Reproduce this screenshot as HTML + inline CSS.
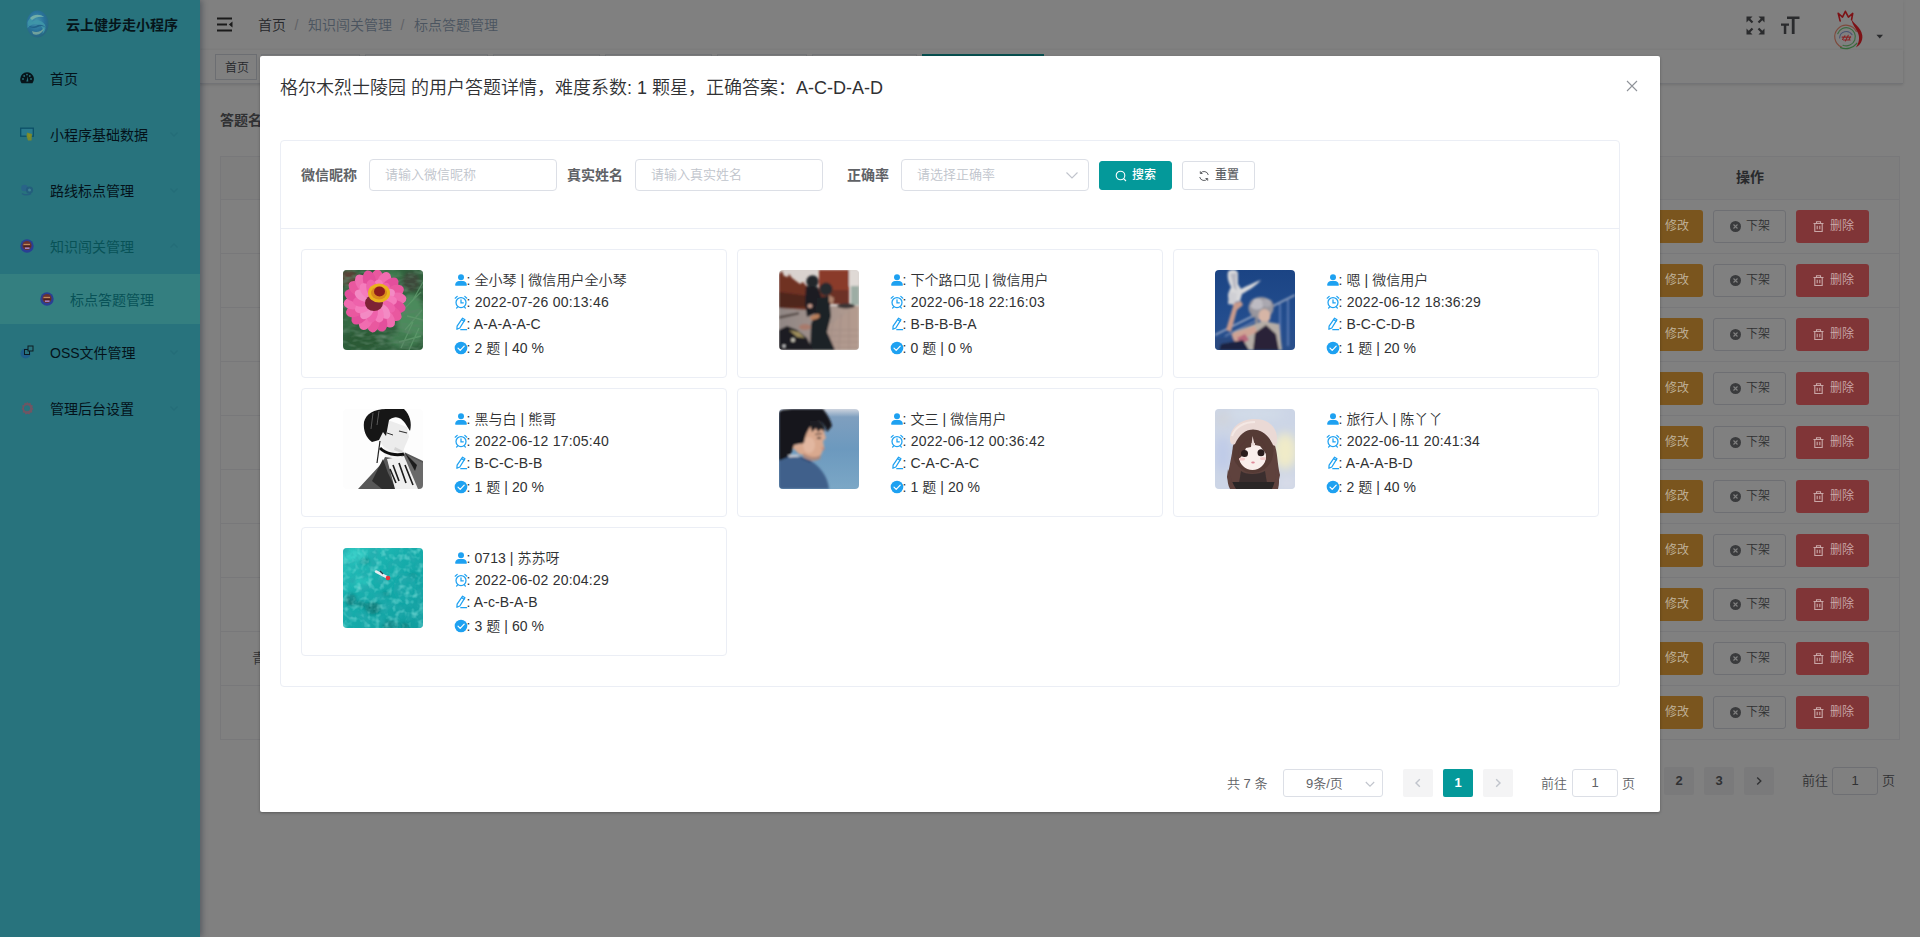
<!DOCTYPE html>
<html lang="zh-CN">
<head>
<meta charset="utf-8">
<title>标点答题管理</title>
<style>
*{box-sizing:border-box;margin:0;padding:0}
html,body{width:1920px;height:937px;overflow:hidden}
body{font-family:"Liberation Sans","Noto Sans CJK SC",sans-serif;font-weight:350;font-size:14px;color:#303133;background:#808080;position:relative}
.abs{position:absolute}
svg{display:block}
/* ---------- sidebar ---------- */
#sidebar{position:absolute;left:0;top:0;width:200px;height:937px;background:#28737d;z-index:5;box-shadow:2px 0 6px rgba(0,21,41,.35)}
#sidebar .logo{position:absolute;left:0;top:0;width:200px;height:50px}
#sidebar .logo .t{position:absolute;left:66px;top:0;line-height:50px;font-size:14px;font-weight:700;color:#06151a;white-space:nowrap}
.mi{position:absolute;left:0;width:200px;height:56px;line-height:56px;font-size:14px;color:#04121a;white-space:nowrap}
.mi .tx{position:absolute;left:50px;top:1px;font-weight:400}
.mi .ic{position:absolute;left:20px;top:21px;width:14px;height:14px}
.mi .ar{position:absolute;left:168px;top:22px;width:12px;height:12px}
.mi.act{color:#085257}
.sub{position:absolute;left:0;top:274px;width:200px;height:50px;background:#347f80;line-height:50px;color:#085257;font-size:14px}
.sub .tx{position:absolute;left:70px;top:1px;font-weight:400}
.sub .ic{position:absolute;left:40px;top:18px;width:14px;height:14px}
/* ---------- dimmed main ---------- */
#main{position:absolute;left:200px;top:0;width:1720px;height:937px;background:#808080;overflow:hidden}
#navbar{position:absolute;left:0;top:0;width:1703px;height:50px;background:#808080;box-shadow:0 1px 4px rgba(0,10,20,.08)}
#tags{position:absolute;left:0;top:50px;width:1703px;height:34px;background:#808080;border-bottom:1px solid #727376;box-shadow:0 1px 3px 0 rgba(0,0,0,.10),0 0 3px 0 rgba(0,0,0,.04)}
.bc{position:absolute;top:0;line-height:50px;font-size:14px;white-space:nowrap}

/* ---------- table behind ---------- */
#tbl{position:absolute;left:20px;top:156px;width:1680px;height:584px;border:1px solid #78787a;border-bottom:0;background:#808080}
#tbl .th{position:absolute;left:0;top:0;width:1678px;height:43px;background:#7e7e7e;border-bottom:1px solid #78787a}
#tbl .th b{position:absolute;left:1515px;top:-1px;line-height:42px;font-size:14px;color:#28292b;font-weight:700}
.tr{position:absolute;left:0;width:1678px;height:54px;border-bottom:1px solid #78787a}
.tb{position:absolute;top:10px;height:33px;width:73px;border-radius:3px;font-size:12px;line-height:33px;white-space:nowrap}
.tb svg{position:absolute;top:10px;width:13px;height:13px}
.tb span{position:absolute;top:0}
.b1{left:1409px;background:#7a551e;color:#c2b69e}
.b2{left:1492px;border:1px solid #6e6f73;color:#303133;line-height:31px}
.b2 svg{top:9px}
.b3{left:1575px;background:#803537;color:#cdabab}
.pg{position:absolute;top:767px;height:28px;width:30px;border-radius:2px;background:#7a7a7b;color:#303133;font-size:13px;line-height:28px;text-align:center;font-weight:700}
.tag{position:absolute;top:4px;height:26px;border:1px solid #6c6e72;font-size:12px;line-height:24px;color:#24272b;white-space:nowrap;background:#808080}
/* ---------- modal ---------- */
#dlg{position:absolute;left:260px;top:56px;width:1400px;height:756px;background:#fff;border-radius:2px;box-shadow:0 1px 3px rgba(0,0,0,.3);z-index:10}
#dlg .title{position:absolute;left:20px;top:20px;line-height:24px;font-size:18px;color:#303133;white-space:nowrap}
#card{position:absolute;left:20px;top:84px;width:1340px;height:547px;border:1px solid #ebeef5;border-radius:4px;background:#fff}
#card .hd{position:absolute;left:0;top:0;width:1338px;height:88px;border-bottom:1px solid #ebeef5}
.lbl{position:absolute;top:18px;line-height:32px;font-size:14px;font-weight:700;color:#606266;white-space:nowrap}
.inp{position:absolute;top:18px;width:188px;height:32px;border:1px solid #dcdfe6;border-radius:4px;background:#fff;line-height:30px;padding-left:15px;font-size:13px;color:#c0c4cc;white-space:nowrap}
.btn{position:absolute;top:20px;height:29px;border-radius:3px;font-size:12px;font-weight:500;line-height:27px;white-space:nowrap;border:1px solid #dcdfe6;color:#606266;background:#fff}
.uc{position:absolute;width:426px;height:129px;border:1px solid #ebeef5;border-radius:4px;background:#fff}
.uc .av{position:absolute;left:41px;top:20px;width:80px;height:80px;border-radius:4px;overflow:hidden}
.uc .ln{position:absolute;left:152px;height:22px;line-height:22px;font-size:14px;color:#303133;white-space:nowrap}
.uc .ln svg{position:absolute;left:0;top:4px;width:14px;height:14px}
.uc .ln span{position:absolute;left:12.600px;top:0}

.pgn{position:absolute;left:0;top:713px;width:1400px;height:28px}
.pb{position:absolute;top:0;width:30px;height:28px;border-radius:2px;background:#f4f4f5;color:#606266;font-size:13px;font-weight:700;line-height:28px;text-align:center}
.pb svg{margin:8px 0 0 9px}
.uc .ln span{letter-spacing:.06px}
.uc .l2 span{letter-spacing:.22px}
.uc .l3 span{letter-spacing:.1px}
</style>
</head>
<body>
<div id="main">
  <div class="abs" style="left:20px;top:100px;line-height:40px;font-size:14px;font-weight:700;color:#303133;white-space:nowrap">答题名称</div>
  <div id="tbl"><div class="th"><b>操作</b></div>
<div class="tr" style="top:43px"><div class="tb b1"><span style="left:35px">修改</span></div><div class="tb b2"><svg style="left:15px" viewBox="0 0 13 13"><circle cx="6.500" cy="6.500" r="5.500" fill="#3a3b3d"/><path d="M4.500 4.500l4 4M8.500 4.500l-4 4" stroke="#808080" stroke-width="1.100"/></svg><span style="left:32px">下架</span></div><div class="tb b3"><svg style="left:16px" viewBox="0 0 13 13"><path d="M1.500 3.500h10M4.500 3.500V1.800h4v1.700M2.800 3.500v8h7.400v-8M5.200 5.800v3.500M7.800 5.800v3.500" fill="none" stroke="#c9a7a7" stroke-width="1.100"/></svg><span style="left:34px">删除</span></div></div>
<div class="tr" style="top:97px"><div class="tb b1"><span style="left:35px">修改</span></div><div class="tb b2"><svg style="left:15px" viewBox="0 0 13 13"><circle cx="6.500" cy="6.500" r="5.500" fill="#3a3b3d"/><path d="M4.500 4.500l4 4M8.500 4.500l-4 4" stroke="#808080" stroke-width="1.100"/></svg><span style="left:32px">下架</span></div><div class="tb b3"><svg style="left:16px" viewBox="0 0 13 13"><path d="M1.500 3.500h10M4.500 3.500V1.800h4v1.700M2.800 3.500v8h7.400v-8M5.200 5.800v3.500M7.800 5.800v3.500" fill="none" stroke="#c9a7a7" stroke-width="1.100"/></svg><span style="left:34px">删除</span></div></div>
<div class="tr" style="top:151px"><div class="tb b1"><span style="left:35px">修改</span></div><div class="tb b2"><svg style="left:15px" viewBox="0 0 13 13"><circle cx="6.500" cy="6.500" r="5.500" fill="#3a3b3d"/><path d="M4.500 4.500l4 4M8.500 4.500l-4 4" stroke="#808080" stroke-width="1.100"/></svg><span style="left:32px">下架</span></div><div class="tb b3"><svg style="left:16px" viewBox="0 0 13 13"><path d="M1.500 3.500h10M4.500 3.500V1.800h4v1.700M2.800 3.500v8h7.400v-8M5.200 5.800v3.500M7.800 5.800v3.500" fill="none" stroke="#c9a7a7" stroke-width="1.100"/></svg><span style="left:34px">删除</span></div></div>
<div class="tr" style="top:205px"><div class="tb b1"><span style="left:35px">修改</span></div><div class="tb b2"><svg style="left:15px" viewBox="0 0 13 13"><circle cx="6.500" cy="6.500" r="5.500" fill="#3a3b3d"/><path d="M4.500 4.500l4 4M8.500 4.500l-4 4" stroke="#808080" stroke-width="1.100"/></svg><span style="left:32px">下架</span></div><div class="tb b3"><svg style="left:16px" viewBox="0 0 13 13"><path d="M1.500 3.500h10M4.500 3.500V1.800h4v1.700M2.800 3.500v8h7.400v-8M5.200 5.800v3.500M7.800 5.800v3.500" fill="none" stroke="#c9a7a7" stroke-width="1.100"/></svg><span style="left:34px">删除</span></div></div>
<div class="tr" style="top:259px"><div class="tb b1"><span style="left:35px">修改</span></div><div class="tb b2"><svg style="left:15px" viewBox="0 0 13 13"><circle cx="6.500" cy="6.500" r="5.500" fill="#3a3b3d"/><path d="M4.500 4.500l4 4M8.500 4.500l-4 4" stroke="#808080" stroke-width="1.100"/></svg><span style="left:32px">下架</span></div><div class="tb b3"><svg style="left:16px" viewBox="0 0 13 13"><path d="M1.500 3.500h10M4.500 3.500V1.800h4v1.700M2.800 3.500v8h7.400v-8M5.200 5.800v3.500M7.800 5.800v3.500" fill="none" stroke="#c9a7a7" stroke-width="1.100"/></svg><span style="left:34px">删除</span></div></div>
<div class="tr" style="top:313px"><div class="tb b1"><span style="left:35px">修改</span></div><div class="tb b2"><svg style="left:15px" viewBox="0 0 13 13"><circle cx="6.500" cy="6.500" r="5.500" fill="#3a3b3d"/><path d="M4.500 4.500l4 4M8.500 4.500l-4 4" stroke="#808080" stroke-width="1.100"/></svg><span style="left:32px">下架</span></div><div class="tb b3"><svg style="left:16px" viewBox="0 0 13 13"><path d="M1.500 3.500h10M4.500 3.500V1.800h4v1.700M2.800 3.500v8h7.400v-8M5.200 5.800v3.500M7.800 5.800v3.500" fill="none" stroke="#c9a7a7" stroke-width="1.100"/></svg><span style="left:34px">删除</span></div></div>
<div class="tr" style="top:367px"><div class="tb b1"><span style="left:35px">修改</span></div><div class="tb b2"><svg style="left:15px" viewBox="0 0 13 13"><circle cx="6.500" cy="6.500" r="5.500" fill="#3a3b3d"/><path d="M4.500 4.500l4 4M8.500 4.500l-4 4" stroke="#808080" stroke-width="1.100"/></svg><span style="left:32px">下架</span></div><div class="tb b3"><svg style="left:16px" viewBox="0 0 13 13"><path d="M1.500 3.500h10M4.500 3.500V1.800h4v1.700M2.800 3.500v8h7.400v-8M5.200 5.800v3.500M7.800 5.800v3.500" fill="none" stroke="#c9a7a7" stroke-width="1.100"/></svg><span style="left:34px">删除</span></div></div>
<div class="tr" style="top:421px"><div class="tb b1"><span style="left:35px">修改</span></div><div class="tb b2"><svg style="left:15px" viewBox="0 0 13 13"><circle cx="6.500" cy="6.500" r="5.500" fill="#3a3b3d"/><path d="M4.500 4.500l4 4M8.500 4.500l-4 4" stroke="#808080" stroke-width="1.100"/></svg><span style="left:32px">下架</span></div><div class="tb b3"><svg style="left:16px" viewBox="0 0 13 13"><path d="M1.500 3.500h10M4.500 3.500V1.800h4v1.700M2.800 3.500v8h7.400v-8M5.200 5.800v3.500M7.800 5.800v3.500" fill="none" stroke="#c9a7a7" stroke-width="1.100"/></svg><span style="left:34px">删除</span></div></div>
<div class="tr" style="top:475px"><span class="abs" style="left:31px;top:0;line-height:53px;font-size:14px;color:#303133">青海省格尔木市</span><div class="tb b1"><span style="left:35px">修改</span></div><div class="tb b2"><svg style="left:15px" viewBox="0 0 13 13"><circle cx="6.500" cy="6.500" r="5.500" fill="#3a3b3d"/><path d="M4.500 4.500l4 4M8.500 4.500l-4 4" stroke="#808080" stroke-width="1.100"/></svg><span style="left:32px">下架</span></div><div class="tb b3"><svg style="left:16px" viewBox="0 0 13 13"><path d="M1.500 3.500h10M4.500 3.500V1.800h4v1.700M2.800 3.500v8h7.400v-8M5.200 5.800v3.500M7.800 5.800v3.500" fill="none" stroke="#c9a7a7" stroke-width="1.100"/></svg><span style="left:34px">删除</span></div></div>
<div class="tr" style="top:529px"><div class="tb b1"><span style="left:35px">修改</span></div><div class="tb b2"><svg style="left:15px" viewBox="0 0 13 13"><circle cx="6.500" cy="6.500" r="5.500" fill="#3a3b3d"/><path d="M4.500 4.500l4 4M8.500 4.500l-4 4" stroke="#808080" stroke-width="1.100"/></svg><span style="left:32px">下架</span></div><div class="tb b3"><svg style="left:16px" viewBox="0 0 13 13"><path d="M1.500 3.500h10M4.500 3.500V1.800h4v1.700M2.800 3.500v8h7.400v-8M5.200 5.800v3.500M7.800 5.800v3.500" fill="none" stroke="#c9a7a7" stroke-width="1.100"/></svg><span style="left:34px">删除</span></div></div>
  </div>
  <div class="pg" style="left:1464px">2</div><div class="pg" style="left:1504px">3</div>
  <div class="pg" style="left:1544px"><svg style="margin:8px 0 0 9px" width="12" height="12" viewBox="0 0 12 12"><path d="M4.200 2.500L7.800 6l-3.600 3.500" fill="none" stroke="#303133" stroke-width="1.400"/></svg></div>
  <div class="abs" style="left:1602px;top:767px;line-height:28px;font-size:13px;color:#303133;white-space:nowrap">前往</div>
  <div class="abs" style="left:1632px;top:767px;width:46px;height:28px;border:1px solid #6e6f73;border-radius:3px;text-align:center;line-height:26px;font-size:13px;color:#303133">1</div>
  <div class="abs" style="left:1682px;top:767px;line-height:28px;font-size:13px;color:#303133">页</div>
  <div id="navbar">
    <svg class="abs" style="left:16px;top:15px" width="20" height="20" viewBox="0 0 20 20"><path d="M1 3.500h15M1 9.500h10M1 15.500h15" stroke="#1a1a1a" stroke-width="1.800"/><path d="M16.500 6.500v6L12.800 9.500z" fill="#1a1a1a"/></svg>
    <span class="bc" style="left:58px;color:#26272a">首页</span>
    <span class="bc" style="left:94.500px;color:#606266">/</span>
    <span class="bc" style="left:108px;color:#4b545f">知识闯关管理</span>
    <span class="bc" style="left:200.500px;color:#606266">/</span>
    <span class="bc" style="left:214px;color:#4b545f">标点答题管理</span>
    <svg class="abs" style="left:1546px;top:16px" width="19" height="19" viewBox="0 0 19 19"><g fill="#2a2b2d"><path d="M.5.500h6L4.300 2.700l3 3-1.600 1.600-3-3L.5 6.500z"/><path d="M18.500.500v6l-2.200-2.200-3 3-1.600-1.600 3-3L12.500.500z"/><path d="M.5 18.500v-6l2.200 2.200 3-3 1.600 1.600-3 3 2.200 2.200z"/><path d="M18.500 18.500h-6l2.200-2.200-3-3 1.600-1.600 3 3 2.200-2.200z"/></g></svg>
    <svg class="abs" style="left:1580px;top:15px" width="20" height="20" viewBox="0 0 20 20"><g fill="#2a2b2d"><path d="M7 1.500h12.500v2.600h-4.900V19h-2.800V4.100H7z"/><path d="M1 8.500h8v2.300H6.300V19H3.800v-8.200H1z"/></g></svg>
    <svg class="abs" style="left:1632px;top:7.500px" width="34.400" height="42" viewBox="0 0 36 44"><g fill="none" stroke-linecap="round" stroke-linejoin="round"><path d="M8.500 13.500L6.500 5.500l4.500 4L14 3.500l3.200 6 4.500-3.800-1.200 6.500" stroke="#7d1216" stroke-width="1.700"/><path d="M25.500 24.500A12 12 0 1 0 10 41" stroke="#7d4a3c" stroke-width="1.200"/><path d="M6 27A9.500 9.500 0 1 1 11.500 39" stroke="#3d6a40" stroke-width="1.200"/><path d="M8 31.500a7 7 0 0 1 13-3.500" stroke="#4a5270" stroke-width="1.100"/><path d="M9 41.500c6 2.500 13 .5 17-4.500" stroke="#376a3a" stroke-width="1.400"/></g><path d="M20.300 11c1.200 5 10.200 9 11.400 17.500.8 6-2.500 10.500-6.700 12.800 3.200-4.600 4.300-9.800 2.300-14.800-2-5.400-6.300-8.500-7-15.500z" fill="#7d1216"/><g stroke="#8a2426" stroke-width="1.100" fill="none" stroke-linecap="round"><path d="M11 33l2.500-4M14 34.500l3-6M17.500 33.500l2-3.500M10.500 30.500h9M12 33.500h7"/></g></svg>
    <svg class="abs" style="left:1675.500px;top:33.500px" width="7.500" height="5" viewBox="0 0 9 6"><path d="M.5.800h8L4.500 5.500z" fill="#2a2b2d"/></svg>
  </div>
  <div id="tags">
    <div class="tag" style="left:15px;width:42px;padding-left:9px;line-height:26px">首页</div>
    <div class="tag" style="left:61px;width:99px;border-color:#737578"></div>
    <div class="tag" style="left:165px;width:123px;border-color:#737578"></div>
    <div class="tag" style="left:293px;width:107px;border-color:#737578"></div>
    <div class="tag" style="left:405px;width:107px;border-color:#737578"></div>
    <div class="tag" style="left:517px;width:90px;border-color:#737578"></div>
    <div class="tag" style="left:612px;width:105px;border-color:#737578"></div>
    <div class="tag" style="left:722px;width:122px;background:#085050;border-color:#085050"></div>
  </div>
</div>
<div id="sidebar">
  <div class="logo">
    <svg class="abs" style="left:25px;top:9px" width="25" height="30" viewBox="0 0 25 30">
      <defs><radialGradient id="lg1" cx="45%" cy="40%" r="60%"><stop offset="0" stop-color="#4595ad"/><stop offset=".6" stop-color="#29729a"/><stop offset="1" stop-color="#276680"/></radialGradient></defs>
      <ellipse cx="12.5" cy="15" rx="11" ry="13.5" fill="url(#lg1)"/>
      <path d="M2.5 13c3-7 11-9 17-5-5-1-10 0-13 5 4-3 10-2 13 2 2 3 1 7-2 10 1-4 0-7-3-9-4-2-8-1-12 3z" fill="#3f97a8" opacity=".9"/>
      <path d="M5 9c4-4 10-4 14-1-4-1-9 0-12 3z" fill="#7fb4a8" opacity=".8"/>
      <path d="M7 22c4 2 9 1 12-3-1 5-6 8-11 6z" fill="#8fb7a0" opacity=".7"/>
      <path d="M3 16c2 3 6 4 10 2 3-2 6-1 8 1-3-4-7-4-10-2-3 1-6 1-8-1z" fill="#1f5f86" opacity=".9"/>
    </svg>
    <div class="t">云上健步走小程序</div>
  </div>
  <div class="mi" style="top:50px">
    <svg class="ic" viewBox="0 0 14 14"><path d="M7 1.2A6.8 6.8 0 0 0 .2 8c0 1.6.5 3 1.400 4.200h10.800A6.800 6.800 0 0 0 7 1.200z" fill="#07141a"/><circle cx="3" cy="8" r=".9" fill="#28737d"/><circle cx="4.200" cy="5" r=".9" fill="#28737d"/><circle cx="7" cy="3.600" r=".9" fill="#28737d"/><circle cx="9.800" cy="5" r=".9" fill="#28737d"/><circle cx="11" cy="8" r=".9" fill="#28737d"/><path d="M6.300 10.500l1.500-5 .5 5z" fill="#28737d"/></svg>
    <span class="tx">首页</span>
  </div>
  <div class="mi" style="top:106px">
    <svg class="ic" viewBox="0 0 14 14"><rect x=".7" y="1.200" width="12.600" height="8" fill="#2a7a8c" stroke="#0c5068" stroke-width="1.300"/><path d="M7 5.500l5 1.500-.5 6.500H8L6.500 9z" fill="#76892f"/><path d="M8 6.500l2.500.8-.3 3H8.500z" fill="#8a8f25"/></svg>
    <span class="tx">小程序基础数据</span>
    <svg class="ar" viewBox="0 0 12 12"><path d="M2.500 4.500L6 8l3.500-3.500" fill="none" stroke="#246d78" stroke-width="1.300"/></svg>
  </div>
  <div class="mi" style="top:162px">
    <svg class="ic" viewBox="0 0 14 14"><circle cx="4.500" cy="5" r="3.300" fill="#2a5f8c" opacity=".75"/><circle cx="9.500" cy="7" r="3.600" fill="#22587c" opacity=".75"/><circle cx="9.500" cy="7" r="1.500" fill="#3f7f94"/><path d="M2 10.500c2 1.500 6 1.500 9 0" stroke="#245a80" stroke-width="1.500" fill="none" opacity=".8"/></svg>
    <span class="tx">路线标点管理</span>
    <svg class="ar" viewBox="0 0 12 12"><path d="M2.500 4.500L6 8l3.500-3.500" fill="none" stroke="#246d78" stroke-width="1.300"/></svg>
  </div>
  <div class="mi act" style="top:218px">
    <svg class="ic" viewBox="0 0 14 14"><circle cx="7" cy="7" r="6.700" fill="#2a3f94"/><circle cx="7" cy="6.500" r="4.600" fill="#6a3230"/><path d="M3.500 5.500h6.500" stroke="#c08a5a" stroke-width="1.300"/><path d="M5 9.200h4.500" stroke="#a884c8" stroke-width="1.500"/><path d="M3.500 7.200h7" stroke="#3a1a1a" stroke-width="1"/></svg>
    <span class="tx">知识闯关管理</span>
    <svg class="ar" viewBox="0 0 12 12"><path d="M2.500 7.500L6 4l3.500 3.500" fill="none" stroke="#246d78" stroke-width="1.300"/></svg>
  </div>
  <div class="sub">
    <svg class="ic" viewBox="0 0 14 14"><circle cx="7" cy="7" r="6.700" fill="#2a3f94"/><circle cx="7" cy="6.500" r="4.600" fill="#6a3230"/><path d="M3.500 5.500h6.500" stroke="#c08a5a" stroke-width="1.300"/><path d="M5 9.200h4.500" stroke="#a884c8" stroke-width="1.500"/><path d="M3.500 7.200h7" stroke="#3a1a1a" stroke-width="1"/></svg>
    <span class="tx">标点答题管理</span>
  </div>
  <div class="mi" style="top:324px">
    <svg class="ic" viewBox="0 0 14 14"><circle cx="5.500" cy="8.500" r="5" fill="#1f5f8a"/><rect x="4.500" y="4.500" width="5" height="5" fill="#28737d" stroke="#0c1c22" stroke-width="1"/><rect x="8" y="1" width="5" height="5" fill="#28737d" stroke="#0c1c22" stroke-width="1"/></svg>
    <span class="tx">OSS文件管理</span>
    <svg class="ar" viewBox="0 0 12 12"><path d="M2.500 4.500L6 8l3.500-3.500" fill="none" stroke="#246d78" stroke-width="1.300"/></svg>
  </div>
  <div class="mi" style="top:380px">
    <svg class="ic" viewBox="0 0 14 14"><path d="M7 .8l1.400 1.500 2-.5.500 2 2 .6-.6 2 1.300 1.600-1.500 1.300.2 2.100-2 .3-.9 1.900L7.500 12.800 5.600 13.600l-.9-1.900-2-.3.200-2.100L1.400 8l1.300-1.600-.6-2 2-.6.500-2 2 .5z" fill="#6f5664"/><circle cx="7" cy="7.200" r="3" fill="#28737d"/></svg>
    <span class="tx">管理后台设置</span>
    <svg class="ar" viewBox="0 0 12 12"><path d="M2.500 4.500L6 8l3.500-3.500" fill="none" stroke="#246d78" stroke-width="1.300"/></svg>
  </div>
</div>
<div id="dlg">
  <div class="title">格尔木烈士陵园 的用户答题详情，难度系数: 1 颗星，正确答案：A-C-D-A-D</div>
  <svg class="abs" style="left:1365px;top:23px" width="14" height="14" viewBox="0 0 14 14"><path d="M2 2l10 10M12 2L2 12" stroke="#8f9399" stroke-width="1.100"/></svg>
  <div id="card">
    <div class="hd">
      <div class="lbl" style="left:20px">微信昵称</div>
      <div class="inp" style="left:88px">请输入微信昵称</div>
      <div class="lbl" style="left:286px">真实姓名</div>
      <div class="inp" style="left:354px">请输入真实姓名</div>
      <div class="lbl" style="left:566px">正确率</div>
      <div class="inp" style="left:620px">请选择正确率<svg class="abs" style="left:162.500px;top:7.500px" width="14" height="14" viewBox="0 0 14 14"><path d="M1.500 4.500L7 10l5.500-5.500" fill="none" stroke="#c0c4cc" stroke-width="1.100"/></svg></div>
      <div class="btn" style="left:818px;width:73px;background:#04999a;border-color:#04999a;color:#fff"><svg class="abs" style="left:15px;top:8px" width="12" height="12" viewBox="0 0 12 12"><circle cx="5.500" cy="5.500" r="4.300" fill="none" stroke="#fff" stroke-width="1.100"/><path d="M8.600 8.600l2.400 2.400" stroke="#fff" stroke-width="1.100"/></svg><span class="abs" style="left:32px;top:0">搜索</span></div>
      <div class="btn" style="left:901px;width:73px"><svg class="abs" style="left:15px;top:8px" width="12" height="12" viewBox="0 0 12 12"><g fill="none" stroke="#606266" stroke-width="1"><path d="M10.300 5A4.400 4.400 0 0 0 2.500 3.200"/><path d="M1.700 7A4.400 4.400 0 0 0 9.500 8.800"/><path d="M2.300 1.300v2.200h2.200M9.700 10.700V8.500H7.500"/></g></svg><span class="abs" style="left:32px;top:0">重置</span></div>
    </div>
    <!--CARDS-->
    <div class="uc" style="left:20px;top:108px">
      <div class="av"><svg width="80" height="80" viewBox="0 0 80 80"><defs><filter id="b1" x="-10%" y="-10%" width="120%" height="120%"><feGaussianBlur stdDeviation=".7"/></filter><filter id="n1" x="0" y="0" width="100%" height="100%"><feTurbulence type="fractalNoise" baseFrequency=".09 .2" numOctaves="2" seed="7"/><feColorMatrix values="0 0 0 0 .10  0 0 0 0 .22  0 0 0 0 .13  2.200 0 0 0 -.950"/></filter><filter id="b1b" x="-20%" y="-20%" width="140%" height="140%"><feGaussianBlur stdDeviation="2"/></filter></defs><rect width="80" height="80" fill="#2f5f3c"/><g filter="url(#b1b)"><ellipse cx="6" cy="8" rx="9" ry="8" fill="#5a4034"/><ellipse cx="68" cy="12" rx="9" ry="10" fill="#3c4a3a"/><ellipse cx="68" cy="50" rx="14" ry="26" fill="#4c8a5c"/><ellipse cx="60" cy="70" rx="14" ry="8" fill="#3f7a50"/><ellipse cx="20" cy="70" rx="18" ry="9" fill="#2a5a36"/><ellipse cx="48" cy="5" rx="12" ry="5" fill="#3f7a4e"/><ellipse cx="6" cy="50" rx="6" ry="12" fill="#356b42"/></g><g filter="url(#b1)" stroke="#5f9a6c" stroke-width="1.300" fill="none" opacity=".8"><path d="M58 78L70 52M62 60L79 40M66 80L76 58M60 40L78 22M70 30L80 12M56 72L78 66M64 46L80 50"/></g><rect width="80" height="80" filter="url(#n1)"/><g filter="url(#b1)"><ellipse cx="32" cy="10" rx="6.500" ry="10.500" fill="#e9599f" transform="rotate(5 32 31)"/><ellipse cx="32" cy="10" rx="6.500" ry="10.500" fill="#f06cb0" transform="rotate(25 32 31)"/><ellipse cx="32" cy="10" rx="6.500" ry="10.500" fill="#e34f9c" transform="rotate(45 32 31)"/><ellipse cx="32" cy="10" rx="6.500" ry="10.500" fill="#e9599f" transform="rotate(65 32 31)"/><ellipse cx="32" cy="10" rx="6.500" ry="10.500" fill="#f06cb0" transform="rotate(85 32 31)"/><ellipse cx="32" cy="10" rx="6.500" ry="10.500" fill="#e34f9c" transform="rotate(105 32 31)"/><ellipse cx="32" cy="10" rx="6.500" ry="10.500" fill="#e9599f" transform="rotate(125 32 31)"/><ellipse cx="32" cy="10" rx="6.500" ry="10.500" fill="#f06cb0" transform="rotate(145 32 31)"/><ellipse cx="32" cy="10" rx="6.500" ry="10.500" fill="#e34f9c" transform="rotate(165 32 31)"/><ellipse cx="32" cy="10" rx="6.500" ry="10.500" fill="#e9599f" transform="rotate(185 32 31)"/><ellipse cx="32" cy="10" rx="6.500" ry="10.500" fill="#f06cb0" transform="rotate(205 32 31)"/><ellipse cx="32" cy="10" rx="6.500" ry="10.500" fill="#e34f9c" transform="rotate(225 32 31)"/><ellipse cx="32" cy="10" rx="6.500" ry="10.500" fill="#e9599f" transform="rotate(245 32 31)"/><ellipse cx="32" cy="10" rx="6.500" ry="10.500" fill="#f06cb0" transform="rotate(265 32 31)"/><ellipse cx="32" cy="10" rx="6.500" ry="10.500" fill="#e34f9c" transform="rotate(285 32 31)"/><ellipse cx="32" cy="10" rx="6.500" ry="10.500" fill="#e9599f" transform="rotate(305 32 31)"/><ellipse cx="32" cy="10" rx="6.500" ry="10.500" fill="#f06cb0" transform="rotate(325 32 31)"/><ellipse cx="32" cy="10" rx="6.500" ry="10.500" fill="#e34f9c" transform="rotate(345 32 31)"/><ellipse cx="32" cy="18" rx="5.500" ry="9" fill="#f57cbc" transform="rotate(12.0 32 31)"/><ellipse cx="32" cy="18" rx="5.500" ry="9" fill="#ee62ab" transform="rotate(37.7 32 31)"/><ellipse cx="32" cy="18" rx="5.500" ry="9" fill="#f38ac4" transform="rotate(63.4 32 31)"/><ellipse cx="32" cy="18" rx="5.500" ry="9" fill="#f57cbc" transform="rotate(89.1 32 31)"/><ellipse cx="32" cy="18" rx="5.500" ry="9" fill="#ee62ab" transform="rotate(114.8 32 31)"/><ellipse cx="32" cy="18" rx="5.500" ry="9" fill="#f38ac4" transform="rotate(140.5 32 31)"/><ellipse cx="32" cy="18" rx="5.500" ry="9" fill="#f57cbc" transform="rotate(166.2 32 31)"/><ellipse cx="32" cy="18" rx="5.500" ry="9" fill="#ee62ab" transform="rotate(191.9 32 31)"/><ellipse cx="32" cy="18" rx="5.500" ry="9" fill="#f38ac4" transform="rotate(217.6 32 31)"/><ellipse cx="32" cy="18" rx="5.500" ry="9" fill="#f57cbc" transform="rotate(243.29999999999998 32 31)"/><ellipse cx="32" cy="18" rx="5.500" ry="9" fill="#ee62ab" transform="rotate(269.0 32 31)"/><ellipse cx="32" cy="18" rx="5.500" ry="9" fill="#f38ac4" transform="rotate(294.7 32 31)"/><ellipse cx="32" cy="18" rx="5.500" ry="9" fill="#f57cbc" transform="rotate(320.4 32 31)"/><ellipse cx="32" cy="18" rx="5.500" ry="9" fill="#ee62ab" transform="rotate(346.09999999999997 32 31)"/><ellipse cx="31" cy="33" rx="9" ry="8" fill="#7e2236"/><ellipse cx="36" cy="23" rx="11" ry="9.500" fill="#e9b21e"/><ellipse cx="36" cy="23" rx="8" ry="6.500" fill="#d98a1c"/><ellipse cx="36.500" cy="21.500" rx="5.500" ry="5" fill="#8c1c1c"/></g></svg></div>
      <div class="ln" style="top:19px"><svg viewBox="0 0 14 14"><circle cx="7" cy="4.300" r="3" fill="#1ea1f1"/><path d="M1.300 12.800v-1.500c0-2 2-3.300 3.600-3.300h4.200c1.600 0 3.600 1.300 3.600 3.300v1.500z" fill="#1ea1f1"/></svg><span>: 全小琴 | 微信用户全小琴</span></div>
      <div class="ln l2" style="top:41px"><svg viewBox="0 0 14 14"><g fill="none" stroke="#1ea1f1" stroke-width="1.250" stroke-linecap="round"><circle cx="7" cy="7.600" r="5"/><path d="M7 4.800v3h2.300"/><path d="M1.200 3.200L3.200 1.400M12.800 3.200l-2-1.800M3.600 11.800l-1 1.300M10.400 11.800l1 1.300"/></g></svg><span>: 2022-07-26 00:13:46</span></div>
      <div class="ln l3" style="top:63px"><svg viewBox="0 0 14 14"><g fill="none" stroke="#1ea1f1" stroke-width="1.250" stroke-linecap="round" stroke-linejoin="round"><path d="M8.600 1.200l2.400 1.500-5.200 8.300-2.900 1.300.2-3.100z"/><path d="M7.700 2.700l2.400 1.500"/><path d="M6.800 12.700h5.800"/></g></svg><span>: A-A-A-A-C</span></div>
      <div class="ln" style="top:87px"><svg viewBox="0 0 14 14"><circle cx="7" cy="7" r="6.300" fill="#1ea1f1"/><path d="M4 7.200l2.200 2.200L10.200 5.200" fill="none" stroke="#fff" stroke-width="1.200" stroke-linecap="round" stroke-linejoin="round"/></svg><span>: 2 题 | 40 %</span></div>
    </div>
    <div class="uc" style="left:456px;top:108px">
      <div class="av"><svg width="80" height="80" viewBox="0 0 80 80"><defs><filter id="b2" x="-10%" y="-10%" width="120%" height="120%"><feGaussianBlur stdDeviation=".9"/></filter><linearGradient id="g2a" x1="0" y1="0" x2="1" y2="0"><stop offset="0" stop-color="#8f8684"/><stop offset=".55" stop-color="#a3928c"/><stop offset="1" stop-color="#b59d90"/></linearGradient></defs><rect width="80" height="80" fill="#d9d2ce"/><g filter="url(#b2)"><rect x="0" y="36" width="80" height="44" fill="url(#g2a)"/><path d="M0 4l3-3 2 5 4 1 1-3 3 4 8 6 3-2 5 6v22L0 38z" fill="#6f3022"/><path d="M0 22l29 4v11L0 38z" fill="#4f271f"/><path d="M40 0h30v33H40z" fill="#8a3b29"/><path d="M40 20h30v14H52l-12 2z" fill="#6d3327"/><path d="M72 15h8v20h-8z" fill="#9dada4"/><path d="M70 0h10v16H70z" fill="#dfd9d5"/><ellipse cx="67" cy="36" rx="9" ry="2.500" fill="#3a3436"/><path d="M0 46l20-4v2.500L0 49z" fill="#5a4f4c"/><path d="M48 56l32-20v44H44z" fill="#b39a8e" opacity=".6"/><g stroke="#8d7c76" stroke-width=".5" opacity=".7"><path d="M48 60h32M46 66h34M45 72h35M44 78h36M54 50l-4 30M62 44l-2 36M70 40v40"/></g><circle cx="33.500" cy="11.500" r="6.200" fill="#23272a"/><circle cx="47" cy="19" r="6.500" fill="#262c2e"/><path d="M27 16l12 1 4 12-1 12-14 6-2-14z" fill="#1c1c22"/><path d="M38 28l12-2 2 20-4 16 8 18H31l1-26 4-10z" fill="#1d2026"/><path d="M50 25l5 3-1 6-4-2z" fill="#b0856e"/><ellipse cx="36" cy="47" rx="5" ry="2.500" fill="#b97f5c" transform="rotate(-20 36 47)"/><ellipse cx="31" cy="36" rx="2.500" ry="2" fill="#c79a8a"/><ellipse cx="26" cy="57" rx="6" ry="3" fill="#a87a6c"/><path d="M0 60l8-4 10 4 10 8 6 12H0z" fill="#1a1c20"/><path d="M10 60l10 2 6 6-8-1z" fill="#9c8c5c"/><circle cx="14" cy="70" r="2" fill="#c8c4b8"/><circle cx="5" cy="76" r="1.500" fill="#d8d8d8"/></g></svg></div>
      <div class="ln" style="top:19px"><svg viewBox="0 0 14 14"><circle cx="7" cy="4.300" r="3" fill="#1ea1f1"/><path d="M1.300 12.800v-1.500c0-2 2-3.300 3.600-3.300h4.200c1.600 0 3.600 1.300 3.600 3.300v1.500z" fill="#1ea1f1"/></svg><span>: 下个路口见 | 微信用户</span></div>
      <div class="ln l2" style="top:41px"><svg viewBox="0 0 14 14"><g fill="none" stroke="#1ea1f1" stroke-width="1.250" stroke-linecap="round"><circle cx="7" cy="7.600" r="5"/><path d="M7 4.800v3h2.300"/><path d="M1.200 3.200L3.200 1.400M12.800 3.200l-2-1.800M3.600 11.800l-1 1.300M10.400 11.800l1 1.300"/></g></svg><span>: 2022-06-18 22:16:03</span></div>
      <div class="ln l3" style="top:63px"><svg viewBox="0 0 14 14"><g fill="none" stroke="#1ea1f1" stroke-width="1.250" stroke-linecap="round" stroke-linejoin="round"><path d="M8.600 1.200l2.400 1.500-5.200 8.300-2.900 1.300.2-3.100z"/><path d="M7.700 2.700l2.400 1.500"/><path d="M6.800 12.700h5.800"/></g></svg><span>: B-B-B-B-A</span></div>
      <div class="ln" style="top:87px"><svg viewBox="0 0 14 14"><circle cx="7" cy="7" r="6.300" fill="#1ea1f1"/><path d="M4 7.200l2.200 2.200L10.200 5.200" fill="none" stroke="#fff" stroke-width="1.200" stroke-linecap="round" stroke-linejoin="round"/></svg><span>: 0 题 | 0 %</span></div>
    </div>
    <div class="uc" style="left:892px;top:108px">
      <div class="av"><svg width="80" height="80" viewBox="0 0 80 80"><defs><filter id="b3" x="-10%" y="-10%" width="120%" height="120%"><feGaussianBlur stdDeviation=".9"/></filter><linearGradient id="g3" x1="0" y1="0" x2="0" y2="1"><stop offset="0" stop-color="#1b4484"/><stop offset=".6" stop-color="#234d8e"/><stop offset="1" stop-color="#2a4f8a"/></linearGradient></defs><rect width="80" height="80" fill="url(#g3)"/><g filter="url(#b3)"><path d="M0 65L80 25" stroke="#9aa9c4" stroke-width="1.600"/><path d="M10 66L50 46" stroke="#7f92b8" stroke-width="1.200"/><path d="M65 34v42M73 30v46" stroke="#5273ad" stroke-width="2"/><path d="M0 68h30v12H0z" fill="#2b4a80"/><path d="M13 2c2-3 9-3 10 1v11l3 5c6-3 14-7 20-9-4 5-12 10-19 14l-2 7-10 2-2-7c0-4 2-6 3-9-3-5-4-11-3-15z" fill="#d9d9db"/><path d="M15 4c2 4 3 9 3 13l4 4c-1-6-1-12 0-18z" fill="#b9bac4"/><path d="M14 22l8 1-2 12-7-1z" fill="#cfcfd4"/><path d="M19 33l7-2 2 4-6 5-6 22-5-2z" fill="#c79a8c"/><ellipse cx="46" cy="38" rx="12.500" ry="11" fill="#99979f"/><ellipse cx="42" cy="34" rx="7" ry="5.500" fill="#bdbbc2"/><ellipse cx="52" cy="33" rx="5" ry="4" fill="#aaa8b0"/><path d="M35 40l3 8M38 30l-3 5M56 31l3 6" stroke="#8a8894" stroke-width="1.500"/><ellipse cx="49.500" cy="46" rx="6" ry="7" fill="#d6b5a6"/><path d="M40 44l4 8-4 2z" fill="#8a8890"/><path d="M18 62l30-11 16 3 3 26H24z" fill="#b5ada6"/><path d="M16 64l24-8 2 6-22 10z" fill="#cfa394"/><path d="M22 68l8-4 4 6-8 4z" fill="#b8687a"/><path d="M40 63l11-8 10 9 3 16H38z" fill="#2b2438"/><path d="M6 74l22-4 6 10H4z" fill="#1f2440"/></g></svg></div>
      <div class="ln" style="top:19px"><svg viewBox="0 0 14 14"><circle cx="7" cy="4.300" r="3" fill="#1ea1f1"/><path d="M1.300 12.800v-1.500c0-2 2-3.300 3.600-3.300h4.200c1.600 0 3.600 1.300 3.600 3.300v1.500z" fill="#1ea1f1"/></svg><span>: 嗯 | 微信用户</span></div>
      <div class="ln l2" style="top:41px"><svg viewBox="0 0 14 14"><g fill="none" stroke="#1ea1f1" stroke-width="1.250" stroke-linecap="round"><circle cx="7" cy="7.600" r="5"/><path d="M7 4.800v3h2.300"/><path d="M1.200 3.200L3.200 1.400M12.800 3.200l-2-1.800M3.600 11.800l-1 1.300M10.400 11.800l1 1.300"/></g></svg><span>: 2022-06-12 18:36:29</span></div>
      <div class="ln l3" style="top:63px"><svg viewBox="0 0 14 14"><g fill="none" stroke="#1ea1f1" stroke-width="1.250" stroke-linecap="round" stroke-linejoin="round"><path d="M8.600 1.200l2.400 1.500-5.200 8.300-2.900 1.300.2-3.100z"/><path d="M7.700 2.700l2.400 1.500"/><path d="M6.800 12.700h5.800"/></g></svg><span>: B-C-C-D-B</span></div>
      <div class="ln" style="top:87px"><svg viewBox="0 0 14 14"><circle cx="7" cy="7" r="6.300" fill="#1ea1f1"/><path d="M4 7.200l2.200 2.200L10.200 5.200" fill="none" stroke="#fff" stroke-width="1.200" stroke-linecap="round" stroke-linejoin="round"/></svg><span>: 1 题 | 20 %</span></div>
    </div>
    <div class="uc" style="left:20px;top:247px">
      <div class="av"><svg width="80" height="80" viewBox="0 0 80 80"><defs><filter id="b4" x="-10%" y="-10%" width="120%" height="120%"><feGaussianBlur stdDeviation=".5"/></filter></defs><rect width="80" height="80" fill="#fdfdfd"/><g filter="url(#b4)"><path d="M15 80l24-26 4-8 18-3 19 9v28z" fill="#585858"/><path d="M40 50l5 14 8 16h-14l-10-8z" fill="#2e2e2e"/><path d="M60 44l20 10v26H70z" fill="#6a6a6a"/><path d="M62 44l12 12-2 6z" fill="#1f1f1f"/><path d="M44 50l17-3 14 33H52z" fill="#efefef"/><path d="M50 56l6 16M56 54l7 20M62 56l8 20M47 60l6 14" stroke="#1a1a1a" stroke-width="1.600"/><path d="M40 36l2 12 14 2 6-6-2-6z" fill="#f4f4f4"/><path d="M37 39c6 6 16 8 24 6" stroke="#111" stroke-width="3" fill="none"/><path d="M42 10l22 8 2 10-6 14-10 1-10-6-6-10z" fill="#ececec"/><path d="M52 38l8 4-2 2-7-3z" fill="#d4d4d4"/><path d="M56 22l8 2" stroke="#333" stroke-width="1.200"/><path d="M44 24l6 2" stroke="#333" stroke-width="1"/><path d="M21 13c2-8 10-13 22-13h18c6 6 8 14 6 22l-5-8c-4-6-10-8-16-3l-3 16-3-4-4 8-7 2c-6-4-9-12-8-20z" fill="#141414"/><path d="M30 4l-2 16M36 2l-2 14" stroke="#5a5a5a" stroke-width="1"/><path d="M37 32l-3 22" stroke="#222" stroke-width="1.200"/></g></svg></div>
      <div class="ln" style="top:19px"><svg viewBox="0 0 14 14"><circle cx="7" cy="4.300" r="3" fill="#1ea1f1"/><path d="M1.300 12.800v-1.500c0-2 2-3.300 3.600-3.300h4.200c1.600 0 3.600 1.300 3.600 3.300v1.500z" fill="#1ea1f1"/></svg><span>: 黑与白 | 熊哥</span></div>
      <div class="ln l2" style="top:41px"><svg viewBox="0 0 14 14"><g fill="none" stroke="#1ea1f1" stroke-width="1.250" stroke-linecap="round"><circle cx="7" cy="7.600" r="5"/><path d="M7 4.800v3h2.300"/><path d="M1.200 3.200L3.200 1.400M12.800 3.200l-2-1.800M3.600 11.800l-1 1.300M10.400 11.800l1 1.300"/></g></svg><span>: 2022-06-12 17:05:40</span></div>
      <div class="ln l3" style="top:63px"><svg viewBox="0 0 14 14"><g fill="none" stroke="#1ea1f1" stroke-width="1.250" stroke-linecap="round" stroke-linejoin="round"><path d="M8.600 1.200l2.400 1.500-5.200 8.300-2.900 1.300.2-3.100z"/><path d="M7.700 2.700l2.400 1.500"/><path d="M6.800 12.700h5.800"/></g></svg><span>: B-C-C-B-B</span></div>
      <div class="ln" style="top:87px"><svg viewBox="0 0 14 14"><circle cx="7" cy="7" r="6.300" fill="#1ea1f1"/><path d="M4 7.200l2.200 2.200L10.200 5.200" fill="none" stroke="#fff" stroke-width="1.200" stroke-linecap="round" stroke-linejoin="round"/></svg><span>: 1 题 | 20 %</span></div>
    </div>
    <div class="uc" style="left:456px;top:247px">
      <div class="av"><svg width="80" height="80" viewBox="0 0 80 80"><defs><filter id="b5" x="-10%" y="-10%" width="120%" height="120%"><feGaussianBlur stdDeviation=".9"/></filter><linearGradient id="g5" x1="0" y1="0" x2="0" y2="1"><stop offset="0" stop-color="#cdd3de"/><stop offset=".1" stop-color="#7f9fbf"/><stop offset=".5" stop-color="#6c99be"/><stop offset="1" stop-color="#7ba7c6"/></linearGradient></defs><rect width="80" height="80" fill="url(#g5)"/><g filter="url(#b5)"><path d="M28 14c8-6 15-2 16 6l3 9-3 3 1 6-3 8c-5 4-10 3-14 1l-8-2-8-8 6-6z" fill="#d9a98f"/><ellipse cx="18" cy="33" rx="3.500" ry="4" fill="#e0b8a4"/><path d="M42 38l4 1-2 3z" fill="#c98a7c"/><ellipse cx="40" cy="29" rx="2.200" ry="1" fill="#3a2a2a"/><path d="M36 25.500l7-1" stroke="#2a2020" stroke-width="1.200"/><ellipse cx="30" cy="36" rx="6" ry="8" fill="#e6bda6" opacity=".7"/><path d="M24 44c6 4 12 5 18 2l-1 4c-6 3-12 2-17-2z" fill="#b98670" opacity=".8"/><path d="M0 3c3-3 10-3 20-3h24c5 6 8 12 9 17l-5 6c-2-8-6-11-12-11-6 6-10 14-11 22l-10 2c-2 6-3 9-4 12L0 52z" fill="#17171c"/><path d="M30 12c6-2 12 0 15 5l1 6-4-3-3 3-2-4-4 4z" fill="#1b1b20"/><path d="M0 52l12-5 20 5c12 8 17 18 18 28H0z" fill="#40608b"/><path d="M8 48l10-1 14 6" stroke="#2c466e" stroke-width="1.500" fill="none"/><path d="M9 46l9-.5 4 2-12 1z" fill="#c8ccd4"/></g></svg></div>
      <div class="ln" style="top:19px"><svg viewBox="0 0 14 14"><circle cx="7" cy="4.300" r="3" fill="#1ea1f1"/><path d="M1.300 12.800v-1.500c0-2 2-3.300 3.600-3.300h4.200c1.600 0 3.600 1.300 3.600 3.300v1.500z" fill="#1ea1f1"/></svg><span>: 文三 | 微信用户</span></div>
      <div class="ln l2" style="top:41px"><svg viewBox="0 0 14 14"><g fill="none" stroke="#1ea1f1" stroke-width="1.250" stroke-linecap="round"><circle cx="7" cy="7.600" r="5"/><path d="M7 4.800v3h2.300"/><path d="M1.200 3.200L3.200 1.400M12.800 3.200l-2-1.800M3.600 11.800l-1 1.300M10.400 11.800l1 1.300"/></g></svg><span>: 2022-06-12 00:36:42</span></div>
      <div class="ln l3" style="top:63px"><svg viewBox="0 0 14 14"><g fill="none" stroke="#1ea1f1" stroke-width="1.250" stroke-linecap="round" stroke-linejoin="round"><path d="M8.600 1.200l2.400 1.500-5.200 8.300-2.900 1.300.2-3.100z"/><path d="M7.700 2.700l2.400 1.500"/><path d="M6.800 12.700h5.800"/></g></svg><span>: C-A-C-A-C</span></div>
      <div class="ln" style="top:87px"><svg viewBox="0 0 14 14"><circle cx="7" cy="7" r="6.300" fill="#1ea1f1"/><path d="M4 7.200l2.200 2.200L10.200 5.200" fill="none" stroke="#fff" stroke-width="1.200" stroke-linecap="round" stroke-linejoin="round"/></svg><span>: 1 题 | 20 %</span></div>
    </div>
    <div class="uc" style="left:892px;top:247px">
      <div class="av"><svg width="80" height="80" viewBox="0 0 80 80"><defs><filter id="b6" x="-10%" y="-10%" width="120%" height="120%"><feGaussianBlur stdDeviation=".6"/></filter><filter id="b6b" x="-30%" y="-30%" width="160%" height="160%"><feGaussianBlur stdDeviation="5"/></filter></defs><rect width="80" height="80" fill="#ccd5e6"/><g filter="url(#b6b)"><ellipse cx="70" cy="42" rx="12" ry="18" fill="#f0ebc8"/><ellipse cx="8" cy="45" rx="8" ry="18" fill="#bfcbe8"/><ellipse cx="40" cy="5" rx="30" ry="6" fill="#d2dce8"/><ellipse cx="72" cy="74" rx="10" ry="8" fill="#d8dce8"/><ellipse cx="8" cy="10" rx="8" ry="8" fill="#d0d4dc"/></g><g filter="url(#b6)"><path d="M19 36c-3 10-4 22-7 32l4 12h46l3-14c-3-12-2-22-6-32z" fill="#5e423d"/><ellipse cx="38" cy="42" rx="20.500" ry="22" fill="#573a36"/><ellipse cx="37.500" cy="47.500" rx="13.500" ry="13.500" fill="#f9eeeb"/><path d="M23 46c1-9 6-15 14-17l-1 9-5 1-3 7-4 4z" fill="#573a36"/><path d="M40 29c7 1 11 7 12 17l-3-4-4-5-5-1z" fill="#573a36"/><path d="M37.500 27l2.500 10-3.500-1z" fill="#e6d6d2"/><circle cx="29.500" cy="44.500" r="3.500" fill="#2a1a1c"/><circle cx="46" cy="43.800" r="3.500" fill="#2a1a1c"/><ellipse cx="27" cy="50" rx="3" ry="1.500" fill="#f3c9c9"/><ellipse cx="48" cy="49.500" rx="3" ry="1.500" fill="#f3c9c9"/><ellipse cx="38" cy="53.500" rx="1.800" ry="1" fill="#e08a9a"/><path d="M15 31c0-14 12-21 25-21s23 8 22 22c0 4-2 6-4 4-4-10-12-15.500-20-15.500S24 26 20 35c-3 1.500-5-.5-5-4z" fill="#ead9d5"/><path d="M17 27c3-9 12-14 23-14" stroke="#f4e8e4" stroke-width="2" fill="none"/><path d="M26 62c4 4 18 4 24 0l3 18H23z" fill="#3a2f2f"/><path d="M17 73h45v7H17z" fill="#2b2728"/><path d="M13 60c2 7 4 14 8 20h-6c-3-6-3-13-2-20zM61 58c0 9-1 16-4 22h6c2-7 1-15-2-22z" fill="#5e423d"/></g></svg></div>
      <div class="ln" style="top:19px"><svg viewBox="0 0 14 14"><circle cx="7" cy="4.300" r="3" fill="#1ea1f1"/><path d="M1.300 12.800v-1.500c0-2 2-3.300 3.600-3.300h4.200c1.600 0 3.600 1.300 3.600 3.300v1.500z" fill="#1ea1f1"/></svg><span>: 旅行人 | 陈丫丫</span></div>
      <div class="ln l2" style="top:41px"><svg viewBox="0 0 14 14"><g fill="none" stroke="#1ea1f1" stroke-width="1.250" stroke-linecap="round"><circle cx="7" cy="7.600" r="5"/><path d="M7 4.800v3h2.300"/><path d="M1.200 3.200L3.200 1.400M12.800 3.200l-2-1.800M3.600 11.800l-1 1.300M10.400 11.800l1 1.300"/></g></svg><span>: 2022-06-11 20:41:34</span></div>
      <div class="ln l3" style="top:63px"><svg viewBox="0 0 14 14"><g fill="none" stroke="#1ea1f1" stroke-width="1.250" stroke-linecap="round" stroke-linejoin="round"><path d="M8.600 1.200l2.400 1.500-5.200 8.300-2.900 1.300.2-3.100z"/><path d="M7.700 2.700l2.400 1.500"/><path d="M6.800 12.700h5.800"/></g></svg><span>: A-A-A-B-D</span></div>
      <div class="ln" style="top:87px"><svg viewBox="0 0 14 14"><circle cx="7" cy="7" r="6.300" fill="#1ea1f1"/><path d="M4 7.200l2.200 2.200L10.200 5.200" fill="none" stroke="#fff" stroke-width="1.200" stroke-linecap="round" stroke-linejoin="round"/></svg><span>: 2 题 | 40 %</span></div>
    </div>
    <div class="uc" style="left:20px;top:386px">
      <div class="av"><svg width="80" height="80" viewBox="0 0 80 80"><defs><filter id="b7" x="-30%" y="-30%" width="160%" height="160%"><feGaussianBlur stdDeviation="2.200"/></filter><filter id="b7b" x="-10%" y="-10%" width="120%" height="120%"><feGaussianBlur stdDeviation=".5"/></filter><filter id="n7a" x="0" y="0" width="100%" height="100%"><feTurbulence type="fractalNoise" baseFrequency=".11" numOctaves="3" seed="4"/><feColorMatrix values="0 0 0 0 .02  0 0 0 0 .40  0 0 0 0 .42  1.800 0 0 0 -.750"/></filter><filter id="n7b" x="0" y="0" width="100%" height="100%"><feTurbulence type="fractalNoise" baseFrequency=".16" numOctaves="2" seed="9"/><feColorMatrix values="0 0 0 0 .30  0 0 0 0 .85  0 0 0 0 .80  0 1.300 0 0 -.620"/></filter><linearGradient id="g7" x1="0" y1="0" x2="1" y2="1"><stop offset="0" stop-color="#2cc4be"/><stop offset=".4" stop-color="#16aeac"/><stop offset="1" stop-color="#109c9e"/></linearGradient></defs><rect width="80" height="80" fill="url(#g7)"/><g filter="url(#b7)"><ellipse cx="22" cy="13" rx="5" ry="3" fill="#0c8a88"/><ellipse cx="8" cy="52" rx="5" ry="6" fill="#0a7674"/><ellipse cx="30" cy="60" rx="8" ry="6" fill="#0b7a78"/><ellipse cx="18" cy="56" rx="5" ry="3" fill="#0d8583"/><ellipse cx="48" cy="77" rx="8" ry="4" fill="#0a7270"/><ellipse cx="62" cy="78" rx="4" ry="3" fill="#0c807e"/><ellipse cx="43" cy="46" rx="4" ry="2.500" fill="#0e8c8a"/><ellipse cx="12" cy="8" rx="10" ry="5" fill="#3ad2ca"/><ellipse cx="18" cy="34" rx="9" ry="6" fill="#28c0ba"/><ellipse cx="62" cy="40" rx="10" ry="14" fill="#14a8a8"/><ellipse cx="70" cy="28" rx="4" ry="3" fill="#0e9494"/></g><rect width="80" height="80" filter="url(#n7a)"/><rect width="80" height="80" filter="url(#n7b)"/><g filter="url(#b7b)"><path d="M33 23.500l10.500 5.500" stroke="#e8ecf0" stroke-width="2.600" stroke-linecap="round"/><path d="M37 23l3 3" stroke="#2a3a4a" stroke-width="1.300"/><circle cx="45" cy="30" r="2.300" fill="#e8343c"/></g></svg></div>
      <div class="ln" style="top:19px"><svg viewBox="0 0 14 14"><circle cx="7" cy="4.300" r="3" fill="#1ea1f1"/><path d="M1.300 12.800v-1.500c0-2 2-3.300 3.600-3.300h4.200c1.600 0 3.600 1.300 3.600 3.300v1.500z" fill="#1ea1f1"/></svg><span>: 0713 | 苏苏呀</span></div>
      <div class="ln l2" style="top:41px"><svg viewBox="0 0 14 14"><g fill="none" stroke="#1ea1f1" stroke-width="1.250" stroke-linecap="round"><circle cx="7" cy="7.600" r="5"/><path d="M7 4.800v3h2.300"/><path d="M1.200 3.200L3.200 1.400M12.800 3.200l-2-1.800M3.600 11.800l-1 1.300M10.400 11.800l1 1.300"/></g></svg><span>: 2022-06-02 20:04:29</span></div>
      <div class="ln l3" style="top:63px"><svg viewBox="0 0 14 14"><g fill="none" stroke="#1ea1f1" stroke-width="1.250" stroke-linecap="round" stroke-linejoin="round"><path d="M8.600 1.200l2.400 1.500-5.200 8.300-2.900 1.300.2-3.100z"/><path d="M7.700 2.700l2.400 1.500"/><path d="M6.800 12.700h5.800"/></g></svg><span>: A-c-B-A-B</span></div>
      <div class="ln" style="top:87px"><svg viewBox="0 0 14 14"><circle cx="7" cy="7" r="6.300" fill="#1ea1f1"/><path d="M4 7.200l2.200 2.200L10.200 5.200" fill="none" stroke="#fff" stroke-width="1.200" stroke-linecap="round" stroke-linejoin="round"/></svg><span>: 3 题 | 60 %</span></div>
    </div>
<!--/CARDS-->
  </div>
  <div class="pgn">
    <span class="abs" style="left:967px;top:1px;line-height:28px;font-size:13px;color:#606266;white-space:nowrap">共 7 条</span>
    <div class="abs" style="left:1023px;top:0;width:100px;height:28px;border:1px solid #dcdfe6;border-radius:3px;font-size:13px;line-height:26px;color:#606266"><span class="abs" style="left:22px;top:1px;white-space:nowrap">9条/页</span><svg class="abs" style="left:80px;top:8px" width="12" height="12" viewBox="0 0 12 12"><path d="M1.800 4L6 8.200 10.200 4" fill="none" stroke="#c0c4cc" stroke-width="1.100"/></svg></div>
    <div class="pb" style="left:1143px"><svg width="12" height="12" viewBox="0 0 12 12"><path d="M7.800 2.200L4 6l3.800 3.800" fill="none" stroke="#c0c4cc" stroke-width="1.400"/></svg></div>
    <div class="pb" style="left:1183px;background:#04999a;color:#fff">1</div>
    <div class="pb" style="left:1223px"><svg width="12" height="12" viewBox="0 0 12 12"><path d="M4.200 2.200L8 6 4.200 9.800" fill="none" stroke="#c0c4cc" stroke-width="1.400"/></svg></div>
    <span class="abs" style="left:1281px;top:1px;line-height:28px;font-size:13px;color:#606266;white-space:nowrap">前往</span>
    <div class="abs" style="left:1312px;top:0;width:46px;height:28px;border:1px solid #dcdfe6;border-radius:3px;text-align:center;line-height:26px;font-size:13px;color:#606266">1</div>
    <span class="abs" style="left:1362px;top:1px;line-height:28px;font-size:13px;color:#606266">页</span>
  </div>
</div>
</body>
</html>
